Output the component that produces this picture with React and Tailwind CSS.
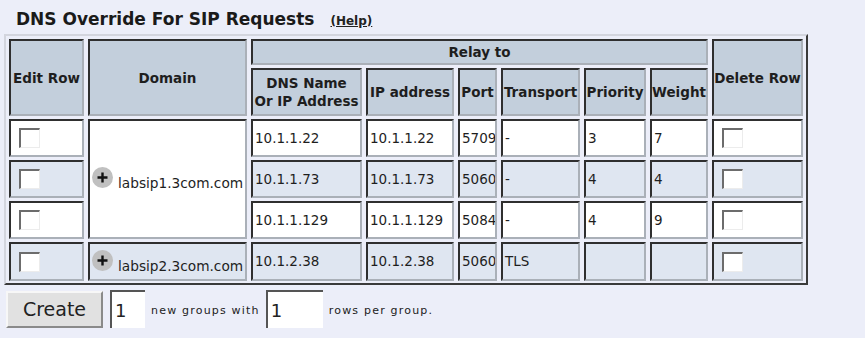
import React from 'react'

const font = { fontFamily: '"DejaVu Sans", Verdana, sans-serif' }

const cell =
  'border-2 border-t-[#2f2f2f] border-l-[#2f2f2f] border-r-[#aab0b8] border-b-[#aab0b8]'
const head = `${cell} bg-[#c3cfdc] font-bold text-[13.5px] leading-[18px] text-[#1e1e1e] flex items-center justify-center text-center whitespace-nowrap`

const rows = [
  { dns: '10.1.1.22', ip: '10.1.1.22', port: '5709', transport: '-', priority: '3', weight: '7', alt: false },
  { dns: '10.1.1.73', ip: '10.1.1.73', port: '5060', transport: '-', priority: '4', weight: '4', alt: true },
  { dns: '10.1.1.129', ip: '10.1.1.129', port: '5084', transport: '-', priority: '4', weight: '9', alt: false },
]

function Checkbox() {
  return (
    <span className="block w-[21px] h-[20px] bg-white border-t-2 border-l-2 border-t-[#6c6c6c] border-l-[#6c6c6c] border-r border-b border-r-[#ececec] border-b-[#ececec]" />
  )
}

function PlusIcon() {
  return (
    <span className="flex items-center justify-center w-[21px] h-[21px] rounded-full bg-[#c0c0c0] mb-[3px] shrink-0">
      <svg width="13" height="13" viewBox="0 0 13 13">
        <path d="M6.5 1.5v10M1.5 6.5h10" stroke="#111" strokeWidth="2.4" />
      </svg>
    </span>
  )
}

function Domain({ name, bg }) {
  return (
    <div className={`${cell} ${bg} flex items-center pl-[2px]`}>
      <span className="flex items-end gap-[5px]">
        <PlusIcon />
        <span className="text-[13.7px] leading-[16px] whitespace-nowrap">{name}</span>
      </span>
    </div>
  )
}

function DataCell({ children, bg }) {
  return (
    <div className={`${cell} ${bg} flex items-center pl-[2px] text-[13.5px] text-[#1e1e1e] overflow-hidden whitespace-nowrap`}>
      {children}
    </div>
  )
}

function BoxCell({ bg }) {
  return (
    <div className={`${cell} ${bg} flex items-center pl-[8px]`}>
      <Checkbox />
    </div>
  )
}

export default function App() {
  return (
    <div className="w-[865px] h-[338px] bg-[#eceef9] text-[#1e1e1e] overflow-hidden" style={font}>
      {/* Title */}
      <div className="h-[34px] pl-[16px] pt-[10px] flex items-baseline">
        <span className="font-bold text-[17px] leading-[19px] text-[#1a1a1a]">
          DNS Override For SIP Requests
        </span>
        <span className="ml-[16px] font-bold text-[12px] underline text-[#222]">(Help)</span>
      </div>

      {/* Table */}
      <div className="ml-[4px] w-[804px] border-2 border-t-[#d3d5de] border-l-[#d3d5de] border-r-[#3a3a3a] border-b-[#3a3a3a] pt-[3px] pl-[3px] pr-[3px] pb-[2px]">
        <div className="grid grid-cols-[75px_159px_111px_88px_39px_79px_62px_58px_91px] grid-rows-[26px_48px_38px_38px_38px_39px] gap-x-[4px] gap-y-[3px]">
          <div className={`${head} row-span-2`}>Edit Row</div>
          <div className={`${head} row-span-2`}>Domain</div>
          <div className={`${head} col-span-6`}>Relay to</div>
          <div className={`${head} row-span-2`}>Delete Row</div>

          <div className={head}>
            DNS Name
            <br />
            Or IP Address
          </div>
          <div className={head}>IP address</div>
          <div className={head}>Port</div>
          <div className={head}>Transport</div>
          <div className={head}>Priority</div>
          <div className={head}>Weight</div>

          {rows.map((r, i) => {
            const bg = r.alt ? 'bg-[#dfe6f1]' : 'bg-white'
            return (
              <React.Fragment key={r.dns}>
                <BoxCell bg={bg} />
                {i === 0 && (
                  <div className="row-span-3 grid">
                    <Domain name="labsip1.3com.com" bg="bg-white" />
                  </div>
                )}
                <DataCell bg={bg}>{r.dns}</DataCell>
                <DataCell bg={bg}>{r.ip}</DataCell>
                <DataCell bg={bg}>{r.port}</DataCell>
                <DataCell bg={bg}>{r.transport}</DataCell>
                <DataCell bg={bg}>{r.priority}</DataCell>
                <DataCell bg={bg}>{r.weight}</DataCell>
                <BoxCell bg={bg} />
              </React.Fragment>
            )
          })}

          <BoxCell bg="bg-[#dfe6f1]" />
          <Domain name="labsip2.3com.com" bg="bg-[#dfe6f1]" />
          <DataCell bg="bg-[#dfe6f1]">10.1.2.38</DataCell>
          <DataCell bg="bg-[#dfe6f1]">10.1.2.38</DataCell>
          <DataCell bg="bg-[#dfe6f1]">5060</DataCell>
          <DataCell bg="bg-[#dfe6f1]">TLS</DataCell>
          <DataCell bg="bg-[#dfe6f1]" />
          <DataCell bg="bg-[#dfe6f1]" />
          <BoxCell bg="bg-[#dfe6f1]" />
        </div>
      </div>

      {/* Create form */}
      <div className="mt-[5px] ml-[6px] flex items-center h-[38px]">
        <span className="flex items-center justify-center w-[97px] h-[37px] bg-[#e1e1e1] border-2 border-t-[#f7f7f7] border-l-[#f7f7f7] border-r-[#8a8a8a] border-b-[#8a8a8a] text-[19px] text-[#222]">
          Create
        </span>
        <span className="ml-[7px] flex items-center w-[35px] h-[38px] bg-white border-t-2 border-l-2 border-t-[#555] border-l-[#555] pl-[3px] text-[18px] text-[#222]">
          1
        </span>
        <span className="ml-[6px] text-[11px] tracking-[1.2px] text-[#222] mt-[4px] whitespace-nowrap">new groups with</span>
        <span className="ml-[6px] flex items-center w-[57px] h-[38px] bg-white border-t-2 border-l-2 border-t-[#555] border-l-[#555] pl-[3px] text-[18px] text-[#222]">
          1
        </span>
        <span className="ml-[6px] text-[11px] tracking-[1.2px] text-[#222] mt-[4px] whitespace-nowrap">rows per group.</span>
      </div>
    </div>
  )
}
